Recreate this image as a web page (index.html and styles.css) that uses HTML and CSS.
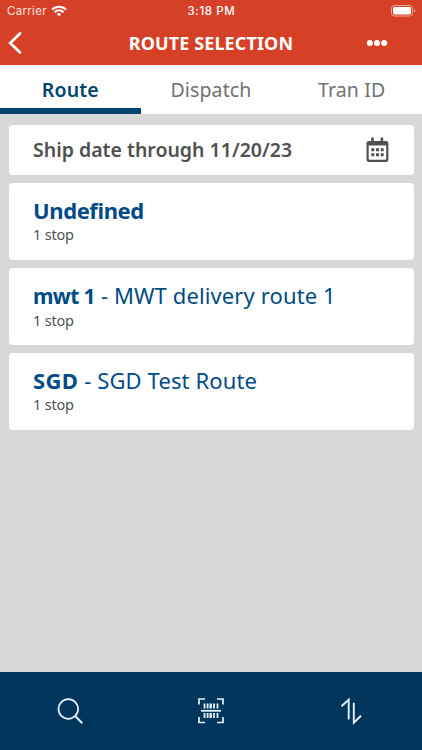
FILE: index.html
```html
<!DOCTYPE html>
<html lang="en">
<head>
    <meta charset="UTF-8">
    <meta name="viewport" content="width=device-width, initial-scale=1.0">
    <title>Route Selection</title>
    <link rel="stylesheet" href="styles.css">
</head>
<body>

<header>
    <div class="status-bar">
        <div class="carrier">
            <span>Carrier</span>
            <svg width="16" height="12" viewBox="0 0 16 12" fill="none" stroke="#fff" stroke-width="2">
                <path d="M1 4.6a10 10 0 0 1 14 0M3.5 7.2a6.4 6.4 0 0 1 9 0"/>
                <path d="M8 11.4L5.7 9.1a3.3 3.3 0 0 1 4.6 0z" fill="#fff" stroke="none"/>
            </svg>
        </div>
        <span class="time">3:18 PM</span>
        <svg class="battery" width="25" height="12" viewBox="0 0 25 12">
            <rect x="0.5" y="0.5" width="21" height="10.5" rx="2.8" fill="none" stroke="#eda89c"/>
            <rect x="2" y="2" width="18" height="7.5" rx="1.4" fill="#fff"/>
            <path d="M23 4v3.6q1.4-.6 1.4-1.8T23 4z" fill="#eda89c"/>
        </svg>
    </div>
    <div class="title-bar">
        <svg class="back" width="14" height="22" viewBox="0 0 14 22" fill="none" stroke="#fff" stroke-width="2.7">
            <path d="M12 1.5L2.2 11L12 20.5" stroke-linecap="round"/>
        </svg>
        <h1>ROUTE SELECTION</h1>
        <svg class="more" width="22" height="8" viewBox="0 0 22 8" fill="#fff">
            <circle cx="3.8" cy="4" r="3"/>
            <circle cx="11" cy="4" r="3"/>
            <circle cx="18.2" cy="4" r="3"/>
        </svg>
    </div>
</header>

<nav class="tabs">
    <a class="tab active">Route</a>
    <a class="tab">Dispatch</a>
    <a class="tab">Tran ID</a>
</nav>

<main>
    <div class="card date-card">
        <span class="date-text">Ship date through 11/20/23</span>
        <svg width="24" height="26" viewBox="0 0 24 26" fill="#505050">
            <path fill-rule="evenodd" d="M5.2 0.5h2.6V4h6.8V0.5h2.6V4H20q2.4 0 2.4 2.3v16.4q0 2.3-2.4 2.3H2.9Q0.5 25 0.5 22.7V6.3Q0.5 4 2.9 4h2.3zM2.7 8.4v13.3q0 1.1 1.1 1.1h15.3q1.1 0 1.1-1.1V8.4z"/>
            <path d="M5.3 11.2h3v3h-3zM10 11.2h3v3h-3zM14.7 11.2h3v3h-3zM5.3 16.2h3v3h-3zM10 16.2h3v3h-3zM14.7 16.2h3v3h-3z"/>
        </svg>
    </div>
    <div class="card route">
        <h2><b>Undefined</b></h2>
        <p>1 stop</p>
    </div>
    <div class="card route">
        <h2><b class="tight">mwt 1</b> - MWT delivery route 1</h2>
        <p>1 stop</p>
    </div>
    <div class="card route">
        <h2><b class="wide">SGD</b> - SGD Test Route</h2>
        <p>1 stop</p>
    </div>
</main>

<footer>
    <div class="action">
        <svg width="28" height="28" viewBox="0 0 28 28" fill="none" stroke="#e4f1fb" stroke-width="1.7">
            <circle cx="12.3" cy="12" r="9.8"/>
            <path d="M19.4 19.2L26.3 26.2" stroke-width="2"/>
        </svg>
    </div>
    <div class="action">
        <svg width="28" height="28" viewBox="0 0 28 28" fill="none" stroke="#e4f1fb">
            <path d="M2 7.5V2h6M20 2h6v5.5M26 20v5.5h-6M8 25.5H2V20" stroke-width="1.7"/>
            <path d="M4 13.8h20" stroke-width="1.8"/>
            <path d="M7.5 6.5v5M7.5 16v5M10.6 6.5v5M10.6 16v5M17 6.5v5M17 16v5M20.5 6.5v5M20.5 16v5" stroke-width="1.8"/>
            <path d="M13.7 6.5v5M13.7 16v5" stroke-width="2.4"/>
        </svg>
    </div>
    <div class="action">
        <svg width="28" height="28" viewBox="0 0 28 28" fill="none" stroke="#e4f1fb" stroke-width="1.9">
            <path d="M3.5 9.2L10.7 2.6V22.5"/>
            <path d="M15.8 5.8V25.7L23 18.8"/>
        </svg>
    </div>
</footer>

</body>
</html>
```

FILE: styles.css
```css
* {
    box-sizing: border-box;
}

body {
    font-family: 'Noto Sans', 'Open Sans', sans-serif;
    background-color: #d8d8d8;
    margin: 0;
    height: 750px;
    display: flex;
    flex-direction: column;
    overflow: hidden;
}

h1, h2, p {
    margin: 0;
    white-space: nowrap;
}

svg {
    display: block;
    flex: none;
}

header {
    background-color: #d64027;
    color: white;
    height: 65px;
}

.status-bar {
    display: grid;
    grid-template-columns: 1fr auto 1fr;
    align-items: center;
    height: 21px;
    padding: 0 6px 0 7px;
    font-family: Inter, sans-serif;
    font-size: 11.5px;
    letter-spacing: 0.3px;
}

.carrier {
    display: flex;
    gap: 4px;
    align-items: center;
    color: #fbe3df;
}

.time {
    font-weight: 500;
    letter-spacing: 0.6px;
}

.battery {
    justify-self: end;
}

.title-bar {
    display: grid;
    grid-template-columns: 1fr auto 1fr;
    align-items: center;
    height: 44px;
    padding: 0 34px 0 8px;
}

.title-bar h1 {
    font-size: 18px;
    font-weight: 700;
    line-height: 42px;
    letter-spacing: 0.1px;
    margin-left: 26px;
}

.more {
    justify-self: end;
}

.tabs {
    display: flex;
    height: 49px;
    background-color: white;
}

.tab {
    width: 33.333%;
    text-align: center;
    font-size: 19.5px;
    line-height: 50px;
    letter-spacing: 0.15px;
    color: #707070;
}

.tab.active {
    font-weight: 600;
    color: #00456b;
    border-bottom: 6px solid #00456b;
}

main {
    flex: 1;
    padding: 11px 8.5px;
    display: flex;
    flex-direction: column;
    gap: 8px;
}

.card {
    background-color: white;
    border-radius: 4px;
    padding: 0 24.5px;
}

.date-card {
    height: 50px;
    display: flex;
    align-items: center;
    justify-content: space-between;
    padding-right: 24px;
    color: #505050;
}

.date-text {
    font-size: 19.5px;
    font-weight: 600;
    white-space: nowrap;
    padding-bottom: 2px;
}

.route {
    height: 77px;
    padding-top: 13px;
    color: #004b87;
}

.route h2 {
    font-size: 22px;
    font-weight: 400;
    line-height: 29px;
    letter-spacing: 0.12px;
}

.route b {
    font-weight: 700;
    letter-spacing: -0.4px;
}

.route .tight {
    font-size: 21px;
    letter-spacing: -0.6px;
}

.route .wide {
    letter-spacing: 0.4px;
}

.route p {
    font-size: 14.5px;
    line-height: 19px;
    letter-spacing: -0.2px;
    color: #505050;
}

footer {
    display: flex;
    height: 78.5px;
    background-color: #00365b;
}

.action {
    flex: 1;
    display: flex;
    align-items: center;
    justify-content: center;
}
```
